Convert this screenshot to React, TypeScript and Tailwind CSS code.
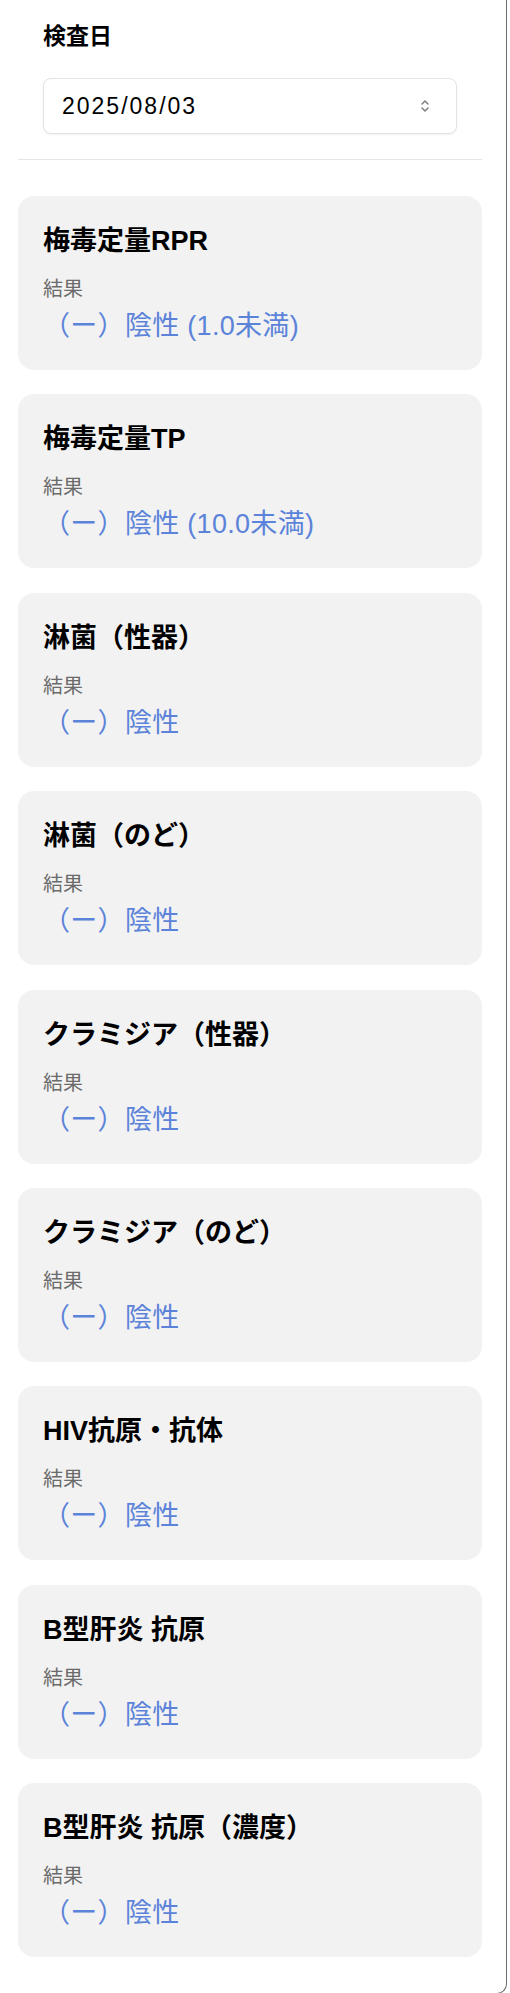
import React from "react";

type Result = {
  name: string;
  value: string;
};

const results: Result[] = [
  { name: "梅毒定量RPR", value: "（ー）陰性 (1.0未満)" },
  { name: "梅毒定量TP", value: "（ー）陰性 (10.0未満)" },
  { name: "淋菌（性器）", value: "（ー）陰性" },
  { name: "淋菌（のど）", value: "（ー）陰性" },
  { name: "クラミジア（性器）", value: "（ー）陰性" },
  { name: "クラミジア（のど）", value: "（ー）陰性" },
  { name: "HIV抗原・抗体", value: "（ー）陰性" },
  { name: "B型肝炎 抗原", value: "（ー）陰性" },
  { name: "B型肝炎 抗原（濃度）", value: "（ー）陰性" },
];

const font = {
  fontFamily: '"Liberation Sans", "Noto Sans CJK JP", sans-serif',
};

const ResultCard: React.FC<{ item: Result }> = ({ item }) => (
  <div className="bg-[#f2f2f2] rounded-2xl px-[25px] pt-6 pb-6">
    <h2 className="text-[27px] leading-[42px] font-bold text-black">{item.name}</h2>
    <p className="mt-3 text-[20px] leading-[30px] text-[#6b6b6b]">結果</p>
    <p className="mt-0.5 text-[27px] leading-[40px] tracking-[0.3px] text-[#5b83d9]">{item.value}</p>
  </div>
);

const App: React.FC = () => {
  return (
    <div
      style={font}
      className="w-[507px] h-[1994px] bg-white border-r border-b border-[#6b6b6b] rounded-br-[10px] overflow-hidden"
    >
      <div className="pl-[18px] pr-[24px]">
        <div className="px-[25px] pt-[19px] pb-[25px]">
          <label className="block text-[23px] leading-[34px] font-bold text-black">検査日</label>
          <div className="mt-[25px] h-[56px] flex items-center justify-between rounded-lg border border-[#e3e3e3] bg-white pl-[18px] pr-[26px] shadow-[0_1px_2px_rgba(0,0,0,0.06)]">
            <span className="text-[23px] tracking-[2px] text-black">2025/08/03</span>
            <svg width="10" height="16" viewBox="0 0 10 16" fill="none" stroke="#777" strokeWidth="1.4" strokeLinecap="round" strokeLinejoin="round">
              <path d="M2 6l3-3 3 3" />
              <path d="M2 10l3 3 3-3" />
            </svg>
          </div>
        </div>
        <div className="border-t border-[#e5e5e5]" />
        <div className="mt-9 flex flex-col gap-[24.4px]">
          {results.map((r) => (
            <ResultCard key={r.name} item={r} />
          ))}
        </div>
      </div>
    </div>
  );
};

export default App;
